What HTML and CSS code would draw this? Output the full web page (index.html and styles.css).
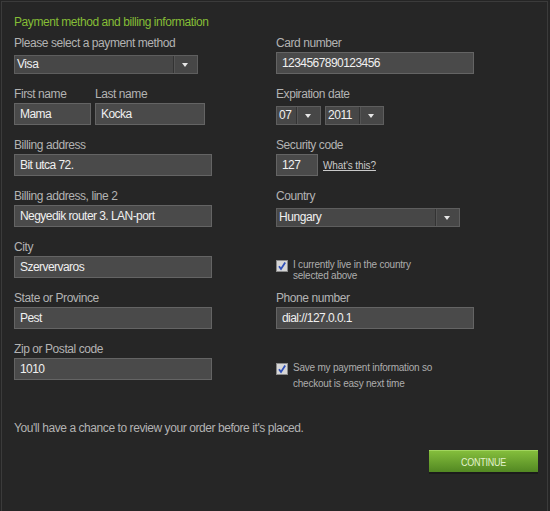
FILE: index.html
```html
<!DOCTYPE html>
<html>
<head>
<meta charset="utf-8">
<link rel="stylesheet" href="styles.css">
</head>
<body>
<div class="frame">
  <div class="title">Payment method and billing information</div>
  <div class="form">
    <div class="field">
      <div class="label">Please select a payment method</div>
      <div class="select w-method"><span class="val">Visa</span><span class="arrow"></span></div>
    </div>
    <div class="field">
      <div class="label">Card number</div>
      <div class="input w-full">1234567890123456</div>
    </div>

    <div class="field pair">
      <div class="sub">
        <div class="label">First name</div>
        <div class="input w-first">Mama</div>
      </div>
      <div class="sub">
        <div class="label">Last name</div>
        <div class="input w-last">Kocka</div>
      </div>
    </div>
    <div class="field">
      <div class="label">Expiration date</div>
      <div class="selects">
        <div class="select w-month"><span class="val">07</span><span class="arrow"></span></div>
        <div class="select w-year"><span class="val">2011</span><span class="arrow"></span></div>
      </div>
    </div>

    <div class="field">
      <div class="label">Billing address</div>
      <div class="input w-full">Bit utca 72.</div>
    </div>
    <div class="field">
      <div class="label">Security code</div>
      <div class="row">
        <div class="input w-code">127</div>
        <a class="help">What's this?</a>
      </div>
    </div>

    <div class="field">
      <div class="label">Billing address, line 2</div>
      <div class="input w-full">Negyedik router 3. LAN-port</div>
    </div>
    <div class="field">
      <div class="label">Country</div>
      <div class="select w-method"><span class="val">Hungary</span><span class="arrow"></span></div>
    </div>

    <div class="field">
      <div class="label">City</div>
      <div class="input w-full">Szervervaros</div>
    </div>
    <div class="field check-a">
      <div class="check">
        <span class="box"><svg width="10" height="10" viewBox="0 0 10 10"><path d="M2 5.2 L4 8 L8.2 1.6" fill="none" stroke="#2f4fb8" stroke-width="1.8"/></svg></span>
        <span class="ctext">I currently live in the country<br>selected above</span>
      </div>
    </div>

    <div class="field">
      <div class="label">State or Province</div>
      <div class="input w-full">Pest</div>
    </div>
    <div class="field">
      <div class="label">Phone number</div>
      <div class="input w-full">dial://127.0.0.1</div>
    </div>

    <div class="field">
      <div class="label">Zip or Postal code</div>
      <div class="input w-full">1010</div>
    </div>
    <div class="field check-b">
      <div class="check">
        <span class="box"><svg width="10" height="10" viewBox="0 0 10 10"><path d="M2 5.2 L4 8 L8.2 1.6" fill="none" stroke="#2f4fb8" stroke-width="1.8"/></svg></span>
        <span class="ctext tall">Save my payment information so<br>checkout is easy next time</span>
      </div>
    </div>
  </div>
  <div class="note">You'll have a chance to review your order before it's placed.</div>
  <div class="actions">
    <div class="btn"><span class="btn-text">CONTINUE</span></div>
  </div>
</div>
</body>
</html>
```
FILE: styles.css
```css
html, body {
  margin: 0;
  padding: 0;
  background: #252525;
  height: 100%;
}
body {
  font-family: "Liberation Sans", Arial, sans-serif;
  font-size: 12px;
  letter-spacing: -0.43px;
  overflow: hidden;
}
.frame {
  margin: 1px 2px 0 1px;
  border: 1px solid #3b3b3b;
  border-bottom: none;
  height: 520px;
  box-sizing: border-box;
  padding: 13px 9px 0 12px;
  background: #262626;
}
.title {
  color: #85bd36;
  line-height: 14px;
  height: 14px;
  margin-bottom: 6px;
}
.form {
  display: grid;
  grid-template-columns: 262px 1fr;
  grid-auto-rows: 51px;
}
.field {
  display: flex;
  flex-direction: column;
  align-items: flex-start;
}
.pair {
  flex-direction: row;
  gap: 4px;
}
.sub {
  display: flex;
  flex-direction: column;
}
.label {
  color: #b3b3b3;
  line-height: 14px;
  height: 14px;
  padding-top: 1px;
  white-space: nowrap;
}
.input {
  margin-top: 2px;
  height: 22px;
  box-sizing: border-box;
  background: #4a4a4a;
  border: 1px solid #646464;
  color: #f0f0f0;
  line-height: 20px;
  padding-left: 5px;
  letter-spacing: -0.55px;
  white-space: nowrap;
}
.w-full { width: 198px; }
.w-first { width: 77px; }
.w-last { width: 110px; }
.w-code { width: 42px; }
.select {
  margin-top: 5px;
  height: 19px;
  box-sizing: border-box;
  background: #474747;
  border: 1px solid #5e5e5e;
  color: #f0f0f0;
  display: flex;
  align-items: stretch;
  line-height: 17px;
}
.select .val {
  flex: 1;
  padding-left: 2px;
}
.select .arrow {
  width: 23px;
  border-left: 1px solid #333333;
  box-shadow: inset 1px 0 0 #555;
  position: relative;
}
.select .arrow::after {
  content: "";
  position: absolute;
  left: 8px;
  top: 7px;
  border-left: 3.5px solid transparent;
  border-right: 3.5px solid transparent;
  border-top: 4px solid #e6e6e6;
}
.w-method { width: 184px; }
.w-month { width: 45px; }
.w-year { width: 59px; }
.selects {
  display: flex;
  gap: 4px;
}
.row {
  display: flex;
  align-items: center;
  gap: 5px;
}
.help {
  margin-top: 2px;
  color: #c9c9c9;
  font-size: 10px;
  letter-spacing: -0.1px;
  text-decoration: underline;
}
.check {
  display: flex;
  align-items: flex-start;
  gap: 5px;
}
.check-a { padding-top: 20px; }
.check-b { padding-top: 22px; }
.box {
  width: 12px;
  height: 12px;
  box-sizing: border-box;
  background: #d6d6d6;
  border: 1px solid #8a8a8a;
  display: flex;
  align-items: center;
  justify-content: center;
  margin-top: 1px;
}
.check-b .box { margin-top: 0; }
.ctext {
  color: #adadad;
  font-size: 10px;
  letter-spacing: -0.22px;
  line-height: 11px;
  white-space: nowrap;
}
.ctext.tall {
  line-height: 16px;
  margin-top: -3px;
}
.note {
  margin-top: 29px;
  color: #b3b3b3;
  line-height: 14px;
}
.actions {
  display: flex;
  justify-content: flex-end;
  margin-top: 15px;
}
.btn {
  width: 109px;
  height: 22px;
  box-sizing: border-box;
  background: linear-gradient(#84bd3c, #528822);
  border-top: 1px solid #a2d55e;
  box-shadow: 0 2px 0 #1b1b1b;
  display: flex;
  justify-content: center;
  align-items: center;
}
.btn-text {
  display: inline-block;
  color: #e2f2cc;
  font-size: 11px;
  letter-spacing: -0.3px;
  transform: scaleX(0.82);
  line-height: 20px;
}
```
